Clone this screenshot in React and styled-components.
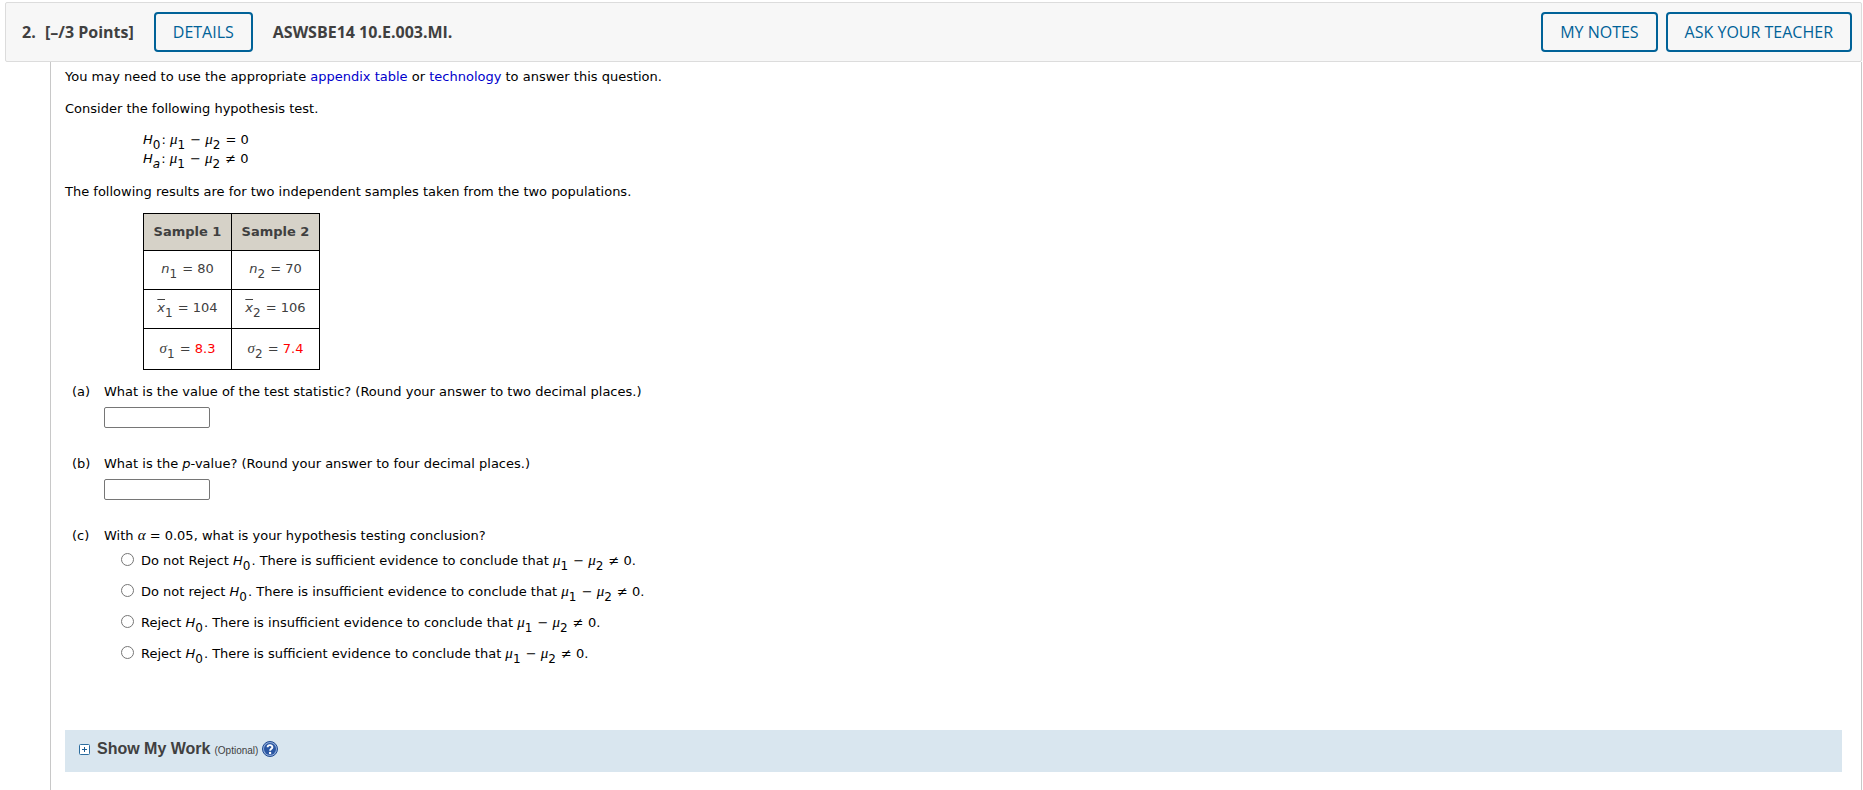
import React from "react";
import styled, { createGlobalStyle } from "styled-components";

const Global = createGlobalStyle`
  * { box-sizing: border-box; }
  body { margin: 0; background: #fff; color: #000; font: 13px/16px Verdana, "DejaVu Sans", sans-serif; }
`;
const Page = styled.main`
  min-height: 100vh;
  display: flex;
  flex-direction: column;
  padding: 2px 1px 0 5px;
`;
const Header = styled.header`
  display: flex;
  align-items: center;
  height: 60px;
  padding: 0 9px 0 16px;
  background: #f7f7f7;
  border: 1px solid #dcdcdc;
  border-radius: 2px;
  color: #404040;
  font: 700 16px/24px "Open Sans", sans-serif;
`;
const Number = styled.span`
  width: 23px;
`;
const Points = styled.span`
  margin-right: 20px;
`;
const Source = styled.span`
  margin-left: 20px;
`;
const Actions = styled.div`
  display: flex;
  gap: 8px;
  margin-left: auto;
`;
const Button = styled.button`
  height: 40px;
  padding: 0 17px;
  border: 2px solid #006298;
  border-radius: 4px;
  background: #f7f7f7;
  color: #006298;
  font: 400 16px/24px "Open Sans", sans-serif;
`;
const Body = styled.section`
  flex: 1;
  margin: 0 0 0 45px;
  padding: 7px 19px 19px 14px;
  border: solid #c8c8c8;
  border-width: 0 1px;
`;
const Text = styled.p`
  margin: 0 0 ${(p) => p.$gap || 16}px;
`;
const Link = styled.a`
  color: #0000cc;
  text-decoration: none;
`;
const Hypotheses = styled.div`
  display: grid;
  gap: 3px;
  margin: 0 0 17px 78px;
`;
const Sub = styled.sub`
  margin-right: 1px;
  font-size: 12px;
  line-height: 0;
  vertical-align: -5px;
`;
const Symbol = styled.i`
  font-family: "Liberation Serif", serif;
  font-size: 15px;
  line-height: 0;
`;
const Samples = styled.table`
  margin: 0 0 14px 78px;
  border-collapse: collapse;
  color: #404040;
  th, td {
    width: 88px;
    padding: 0;
    border: 1px solid #000;
    text-align: center;
  }
  th { height: 37px; background: #d6d2c8; }
  td { height: 39px; padding-bottom: 2px; }
  tr:last-child td { height: 41px; padding-bottom: 0; }
`;
const Bar = styled.i`
  text-decoration: overline;
`;
const Random = styled.span`
  color: #f00;
`;
const Part = styled.div`
  display: flex;
  margin: 0 0 28px 7px;
`;
const Mark = styled.span`
  width: 32px;
`;
const Question = styled.div`
  display: flex;
  flex-direction: column;
  align-items: flex-start;
  gap: 7px;
`;
const Answer = styled.input`
  width: 106px;
  height: 21px;
  border: 1px solid #767676;
  border-radius: 2px;
  font: inherit;
`;
const Choices = styled.fieldset`
  margin: 0;
  padding: 2px 0 0 17px;
  border: 0;
`;
const Choice = styled.label`
  display: flex;
  align-items: center;
  height: 31px;
  gap: 7px;
  &:first-child { height: 30px; }
`;
const Radio = styled.input`
  width: 13px;
  height: 13px;
  margin: 0 0 3px;
`;
const Work = styled.div`
  display: flex;
  align-items: center;
  height: 42px;
  margin-top: 61px;
  padding: 0 14px 4px;
  background: #d9e6ef;
`;
const WorkToggle = styled.button`
  display: flex;
  align-items: center;
  gap: 7px;
  padding: 0;
  border: 0;
  background: none;
  color: #404040;
  font: 700 16px/20px "Liberation Sans", Arial, sans-serif;
`;
const Optional = styled.span`
  margin: 3px 4px 0;
  color: #404040;
  font: 10px/16px "Liberation Sans", Arial, sans-serif;
`;
const Help = styled.button`
  display: flex;
  padding: 0;
  border: 0;
  background: none;
`;

const H = ({ index = "0" }) => <><i>H</i><Sub>{index}</Sub></>;
const Difference = () => <><Symbol>μ</Symbol><Sub>1</Sub> − <Symbol>μ</Symbol><Sub>2</Sub></>;

const choices = [
  ["Do not Reject", "sufficient"],
  ["Do not reject", "insufficient"],
  ["Reject", "insufficient"],
  ["Reject", "sufficient"],
];

export default function App() {
  return (
    <>
      <Global />
      <Page>
        <Header>
          <Number>2.</Number>
          <Points>[–/3 Points]</Points>
          <Button>DETAILS</Button>
          <Source>ASWSBE14 10.E.003.MI.</Source>
          <Actions>
            <Button>MY NOTES</Button>
            <Button>ASK YOUR TEACHER</Button>
          </Actions>
        </Header>
        <Body>
          <Text>
            You may need to use the appropriate <Link href="#table">appendix table</Link> or{" "}
            <Link href="#technology">technology</Link> to answer this question.
          </Text>
          <Text $gap={15}>Consider the following hypothesis test.</Text>
          <Hypotheses>
            <div><H />: <Difference /> = 0</div>
            <div><H index={<i>a</i>} />: <Difference /> ≠ 0</div>
          </Hypotheses>
          <Text $gap={13}>The following results are for two independent samples taken from the two populations.</Text>
          <Samples>
            <thead>
              <tr><th>Sample 1</th><th>Sample 2</th></tr>
            </thead>
            <tbody>
              <tr>
                <td><i>n</i><Sub>1</Sub> = 80</td>
                <td><i>n</i><Sub>2</Sub> = 70</td>
              </tr>
              <tr>
                <td><Bar>x</Bar><Sub>1</Sub> = 104</td>
                <td><Bar>x</Bar><Sub>2</Sub> = 106</td>
              </tr>
              <tr>
                <td><Symbol>σ</Symbol><Sub>1</Sub> = <Random>8.3</Random></td>
                <td><Symbol>σ</Symbol><Sub>2</Sub> = <Random>7.4</Random></td>
              </tr>
            </tbody>
          </Samples>
          <Part>
            <Mark>(a)</Mark>
            <Question>
              <label htmlFor="statistic">What is the value of the test statistic? (Round your answer to two decimal places.)</label>
              <Answer id="statistic" type="text" />
            </Question>
          </Part>
          <Part>
            <Mark>(b)</Mark>
            <Question>
              <label htmlFor="pvalue">What is the <i>p</i>-value? (Round your answer to four decimal places.)</label>
              <Answer id="pvalue" type="text" />
            </Question>
          </Part>
          <Part>
            <Mark>(c)</Mark>
            <div>
              <div id="conclusion">With <Symbol>α</Symbol> = 0.05, what is your hypothesis testing conclusion?</div>
              <Choices aria-labelledby="conclusion">
                {choices.map(([verdict, evidence]) => (
                  <Choice key={verdict + evidence}>
                    <Radio type="radio" name="conclusion" />
                    <span>{verdict} <H />. There is {evidence} evidence to conclude that <Difference /> ≠ 0.</span>
                  </Choice>
                ))}
              </Choices>
            </div>
          </Part>
          <Work>
            <WorkToggle>
              <svg width="11" height="11" viewBox="0 0 11 11" aria-hidden="true">
                <rect x="0.5" y="0.5" width="10" height="10" rx="1" fill="#fff" stroke="#2b6c9e" />
                <path d="M3 5.5h5M5.5 3v5" stroke="#1b5c92" />
              </svg>
              Show My Work
            </WorkToggle>
            <Optional>(Optional)</Optional>
            <Help aria-label="Help">
              <svg width="16" height="16" viewBox="0 0 16 16" aria-hidden="true">
                <circle cx="8" cy="8" r="7.5" fill="#8fabd8" stroke="#1f4a92" />
                <circle cx="8" cy="8" r="6" fill="#2a56a2" />
                <path d="M5.6 6.3C5.6 3.4 10.4 3.4 10.4 6.2 10.4 7.8 8.1 7.8 8.1 9.8" fill="none" stroke="#fff" strokeWidth="1.9" />
                <circle cx="8.1" cy="12" r="1.2" fill="#fff" />
              </svg>
            </Help>
          </Work>
        </Body>
      </Page>
    </>
  );
}
